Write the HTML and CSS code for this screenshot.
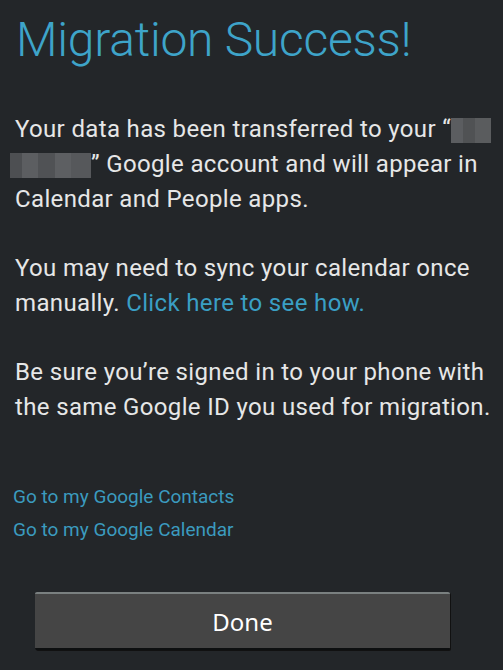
FILE: index.html
```html
<!DOCTYPE html>
<html>
<head>
<meta charset="utf-8">
<link rel="stylesheet" href="styles.css">
</head>
<body>
<main class="screen">
  <h1 class="title">Migration Success!</h1>
  <p class="para">Your data has been transferred to your “<span class="redact redact-a"></span><br><span class="redact redact-b"></span>” Google account and will appear in Calendar and People apps.</p>
  <p class="para">You may need to sync your calendar once manually. <a class="inline-link" href="#">Click here to see how.</a></p>
  <p class="para">Be sure you’re signed in to your phone with the same Google ID you used for migration.</p>
  <nav class="links">
    <a class="small-link" href="#">Go to my Google Contacts</a>
    <a class="small-link" href="#">Go to my Google Calendar</a>
  </nav>
  <div class="actions">
    <button class="done-btn">Done</button>
  </div>
</main>
</body>
</html>
```
FILE: styles.css
```css
html, body {
  margin: 0;
  padding: 0;
  background: #232629;
}
.screen {
  width: 503px;
  height: 670px;
  box-sizing: border-box;
  padding: 0 0 0 15px;
  display: flex;
  flex-direction: column;
  font-family: Roboto, "Noto Sans", sans-serif;
  overflow: hidden;
}
.title {
  margin: 8px 0 0 1px;
  font-weight: 300;
  font-size: 48px;
  line-height: 64px;
  color: #3ea4c9;
  letter-spacing: -0.25px;
}
.para {
  margin: 40px 0 0 0;
  font-size: 24px;
  font-weight: 400;
  line-height: 35px;
  color: #e6e7e7;
  width: 485px;
  letter-spacing: 0.35px;
}
.para + .para {
  margin-top: 34px;
}
.inline-link {
  color: #3a9fc4;
  text-decoration: none;
}
.redact {
  display: inline-block;
  vertical-align: -6px;
  height: 25px;
  background: linear-gradient(90deg, #5b5d60 0 30%, #505254 30% 60%, #5a5c5e 60% 100%);
}
.redact-a {
  width: 40px;
}
.redact-b {
  width: 81px;
  margin-left: -5px;
  background: linear-gradient(90deg, #4d4f52 0 15%, #5c5e61 15% 35%, #505255 35% 55%, #5d5f62 55% 75%, #56585b 75% 100%);
}
.links {
  display: flex;
  flex-direction: column;
  gap: 11px;
  margin: 61px 0 0 -2px;
}
.small-link {
  font-size: 19px;
  line-height: 22px;
  color: #3b9bbf;
  text-decoration: none;
  letter-spacing: 0px;
}
.actions {
  margin: 51px 0 0 20px;
  width: 415px;
}
.done-btn {
  width: 100%;
  height: 58px;
  box-sizing: border-box;
  background: #454545;
  border: none;
  border-top: 2px solid #7a8080;
  border-bottom: 2px solid #0d0f10;
  border-radius: 2px;
  color: #ffffff;
  font-family: "Noto Sans", "Open Sans", sans-serif;
  font-size: 24px;
  padding: 0;
  box-shadow: 1px 1px 0 #111;
}
```
